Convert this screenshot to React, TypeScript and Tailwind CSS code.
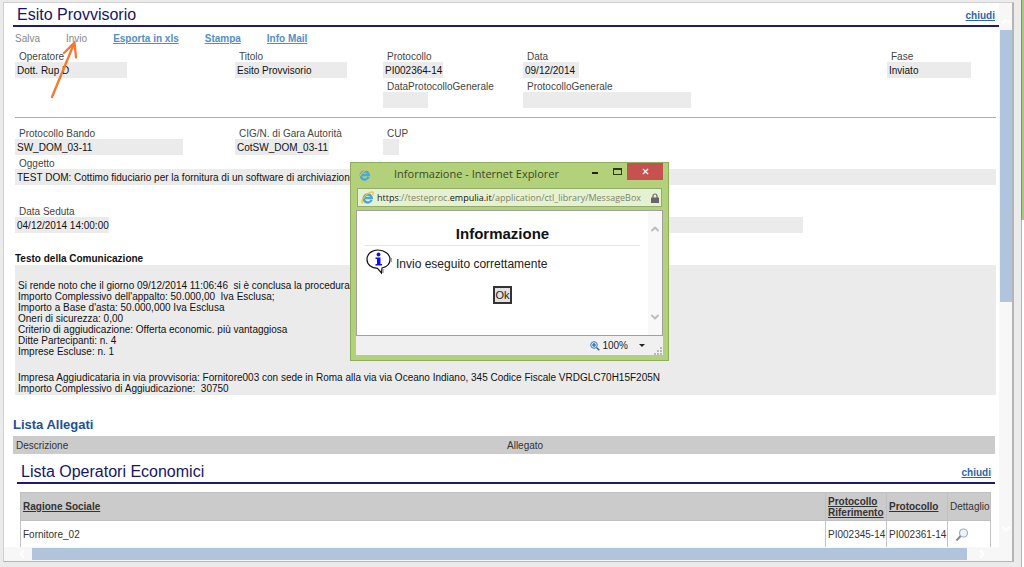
import React from 'react';
import { ChevronDown, ChevronLeft, ChevronRight, ChevronUp } from 'lucide-react';

interface FieldProps {
  id: string;
  label: string;
  value?: string;
  width: string;
  className?: string;
}

const Field = ({ id, label, value = '', width, className = '' }: FieldProps) => (
  <div className={`flex flex-col ${className}`}>
    <label htmlFor={id} className="h-[14px] pl-1 leading-[18px] whitespace-nowrap text-[#444]">
      {label}
    </label>
    <input
      id={id}
      readOnly
      value={value}
      className={`h-4 bg-[#ebebeb] pl-[2px] text-[#111] outline-none ${width}`}
    />
  </div>
);

interface SectionTitleProps {
  title: string;
  className?: string;
}

const SectionTitle = ({ title, className = '' }: SectionTitleProps) => (
  <div
    className={`flex h-6 items-center justify-between border-b-2 border-[#1c1c70] pt-[2px] pl-1 ${className}`}
  >
    <h1 className="text-[16px] leading-5 text-[#15156b]">{title}</h1>
    <a href="#chiudi" className="font-bold text-[#2a65b0] underline">
      chiudi
    </a>
  </div>
);

const IeIcon = ({ className }: { className: string }) => (
  <svg viewBox="0 0 16 16" className={className} fill="none">
    <path
      d="M13 11A5 5 0 1 1 13.300 8.700H5"
      stroke="#4aa8dc"
      strokeWidth="3"
    />
    <path
      d="M2.600 14.800C0 15 .8 10.600 4.600 6.600 8.600 2.400 13.600 0 14.800 1.600c.6.9.1 2-.5 3.200"
      stroke="#edc33b"
      strokeWidth="1.500"
    />
  </svg>
);

const InfoIcon = () => (
  <svg viewBox="0 0 26 26" className="h-[26px] w-[26px] shrink-0">
    <path
      d="M12 1C18.500 1 24 5 24 10.500c0 4.500-3.500 7.500-8 8.500l-.5 5-4-4.700C5.500 19 1 15.500 1 10.500 1 5 5.500 1 12 1Z"
      fill="#fff"
      stroke="#111"
      strokeWidth="1.200"
    />
    <path d="M17 20v4M25.200 9v4" stroke="#777" strokeWidth="1" />
    <circle cx="12.500" cy="5.500" r="1.900" fill="#1010f0" />
    <path d="M9.500 8.500h5V15H16v1.500H9.500V15H11v-5H9.500Z" fill="#1010f0" />
  </svg>
);

const MagnifierIcon = () => (
  <svg viewBox="0 0 14 14" className="h-[14px] w-[14px]" fill="none">
    <circle cx="8.500" cy="5" r="4" fill="#eef4fa" stroke="#9fb0c4" strokeWidth="1.200" />
    <path d="M5.600 8 1.500 12.500" stroke="#8a8a8a" strokeWidth="2" />
  </svg>
);

const ZoomIcon = () => (
  <svg viewBox="0 0 10 10" className="h-[10px] w-[10px]" fill="none">
    <circle cx="4" cy="4" r="3.300" fill="#d6e8f8" stroke="#3f7fc0" />
    <path d="M2 4h4M4 2v4" stroke="#1f5fa8" strokeWidth="1.200" />
    <path d="M6.500 6.500 9.300 9.300" stroke="#47617c" strokeWidth="1.500" />
  </svg>
);

const Toolbar = () => (
  <div className="flex h-[21px] items-center gap-[26px] pt-px pl-[11px]">
    <button disabled className="text-[#888]">Salva</button>
    <button disabled className="text-[#888]">Invio</button>
    <a href="#xls" className="font-bold text-[#4f8fcc] underline">Esporta in xls</a>
    <a href="#stampa" className="font-bold text-[#4f8fcc] underline">Stampa</a>
    <a href="#mail" className="font-bold text-[#4f8fcc] underline">Info Mail</a>
  </div>
);

const comunicazione = [
  'Si rende noto che il giorno 09/12/2014 11:06:46  si è conclusa la procedura',
  "Importo Complessivo dell'appalto: 50.000,00  Iva Esclusa;",
  "Importo a Base d'asta: 50.000,000 Iva Esclusa",
  'Oneri di sicurezza: 0,00',
  'Criterio di aggiudicazione: Offerta economic. più vantaggiosa',
  'Ditte Partecipanti: n. 4',
  'Imprese Escluse: n. 1',
];

const aggiudicazione = [
  'Impresa Aggiudicataria in via provvisoria: Fornitore003 con sede in Roma alla via via Oceano Indiano, 345 Codice Fiscale VRDGLC70H15F205N',
  'Importo Complessivo di Aggiudicazione:  30750',
];

const columns = 'grid grid-cols-[220fr_148fr_140fr_364fr_109fr]';

const Details = () => (
  <div className="ml-[11px] mr-[3px]">
    <div className={columns}>
      <Field id="operatore" label="Operatore" value="Dott. Rup D" width="w-28" />
      <Field id="titolo" label="Titolo" value="Esito Provvisorio" width="w-28" />
      <Field id="protocollo" label="Protocollo" value="PI002364-14" width="w-[60px]" />
      <Field id="data" label="Data" value="09/12/2014" width="w-14" />
      <Field id="fase" label="Fase" value="Inviato" width="w-[84px]" />
      <Field
        id="data-generale"
        label="DataProtocolloGenerale"
        width="w-[45px]"
        className="col-start-3"
      />
      <Field id="protocollo-generale" label="ProtocolloGenerale" width="w-[168px]" />
    </div>
    <hr className="mt-[9px] mb-[7px] border-[#b0b0b0]" />
    <div className={columns}>
      <Field id="bando" label="Protocollo Bando" value="SW_DOM_03-11" width="w-[168px]" />
      <Field id="cig" label="CIG/N. di Gara Autorità" value="CotSW_DOM_03-11" width="w-[94px]" />
      <Field id="cup" label="CUP" width="w-4" />
      <Field
        id="oggetto"
        label="Oggetto"
        value="TEST DOM: Cottimo fiduciario per la fornitura di un software di archiviazione w"
        width="w-full"
        className="col-span-5 col-start-1"
      />
    </div>
    <div className={`mt-[18px] ${columns}`}>
      <Field id="seduta" label="Data Seduta" value="04/12/2014 14:00:00" width="w-[94px]" />
      <Field id="note" label="" width="w-[280px]" className="col-start-4" />
    </div>
    <h2 className="mt-5 leading-3 font-bold text-[#111]">Testo della Comunicazione</h2>
    <div className="flex flex-col gap-[15px] bg-[#ebebeb] px-[3px] pt-[15px] pb-px leading-[11px] whitespace-pre text-[#111]">
      {[comunicazione, aggiudicazione].map((lines) => (
        <p key={lines[0]}>{lines.join('\n')}</p>
      ))}
    </div>
  </div>
);

const Attachments = () => (
  <div className="ml-[9px] mr-[4px] mt-[22px]">
    <h2 className="h-[19px] text-[13px] leading-4 font-bold text-[#1c4f9c]">Lista Allegati</h2>
    <table className="w-full table-fixed bg-[#cbcbcb] text-left text-[#333]">
      <thead>
        <tr className="h-[18px]">
          <th className="pl-[3px] font-normal">Descrizione</th>
          <th className="pl-[3px] font-normal">Allegato</th>
        </tr>
      </thead>
    </table>
  </div>
);

const Operators = () => (
  <div className="ml-[13px] mr-[4px] mt-[6px]">
    <SectionTitle title="Lista Operatori Economici" className="pr-1" />
    <div className="mt-2 ml-[3px] mr-1">
      <table className="w-full table-fixed border-collapse border border-[#c4c4c4] text-left text-[#333]">
        <colgroup>
          <col />
          <col className="w-[61px]" />
          <col className="w-[61px]" />
          <col className="w-[43px]" />
        </colgroup>
        <thead>
          <tr className="h-7 bg-[#cbcbcb] leading-[11px]">
            <th className="border border-[#c0c0c0] pl-[2px] underline">Ragione Sociale</th>
            <th className="border border-[#c0c0c0] pl-[2px] underline">Protocollo Riferimento</th>
            <th className="border border-[#c0c0c0] pl-[2px] underline">Protocollo</th>
            <th className="border border-[#c0c0c0] pl-[2px] font-normal">Dettaglio</th>
          </tr>
        </thead>
        <tbody>
          <tr className="h-7">
            <td className="border border-[#c4c4c4] pl-[2px]">Fornitore_02</td>
            <td className="border border-[#c4c4c4] pl-[2px]">PI002345-14</td>
            <td className="border border-[#c4c4c4] pl-[2px]">PI002361-14</td>
            <td className="border border-[#c4c4c4] pl-[7px]">
              <button aria-label="Dettaglio" className="block">
                <MagnifierIcon />
              </button>
            </td>
          </tr>
        </tbody>
      </table>
    </div>
  </div>
);

const VerticalScrollbar = () => (
  <div className="flex w-[13px] shrink-0 flex-col items-center bg-[#f7f7f7]">
    <ChevronUp className="mt-3 mb-[3px] h-3 w-3 shrink-0 text-white" strokeWidth={4} />
    <div className="h-1/2 w-3 bg-[#b0c4de]" />
    <ChevronDown className="mt-auto mb-3 h-3 w-3 shrink-0 text-white" strokeWidth={4} />
  </div>
);

const HorizontalScrollbar = () => (
  <div className="flex h-[14px] shrink-0 items-center bg-[#f7f7f7]">
    <ChevronLeft className="mr-1 ml-3 h-3 w-3 shrink-0 text-white" strokeWidth={4} />
    <div className="h-3 flex-1 bg-[#b0c4de]" />
    <ChevronRight className="mr-6 ml-[9px] h-3 w-3 shrink-0 text-white" strokeWidth={4} />
  </div>
);

const MessageDialog = () => (
  <div
    role="dialog"
    aria-label="Informazione"
    className="absolute top-[162px] left-[350px] flex w-[319px] flex-col border border-[#8fae5c] bg-[#b3d17a] px-[5px] pb-[5px]"
  >
    <div className="flex h-[25px] items-start">
      <IeIcon className="mt-[5px] ml-[2px] h-[13px] w-[13px]" />
      <h2 className="flex-1 pt-[3px] pl-[23px] font-['Open_Sans',sans-serif] text-[11px] leading-4 whitespace-nowrap text-[#3c4a26]">
        Informazione - Internet Explorer
      </h2>
      <button aria-label="Riduci" className="flex h-4 w-6 items-center justify-center">
        <span className="mt-[3px] h-[2px] w-[6px] bg-[#222]" />
      </button>
      <button aria-label="Ingrandisci" className="flex h-4 w-5 items-center justify-center">
        <span className="h-[7px] w-[9px] border border-t-2 border-[#2c3a18]" />
      </button>
      <button
        aria-label="Chiudi"
        className="flex h-[17px] w-9 items-center justify-center bg-[#c75050]"
      >
        <svg viewBox="0 0 8 8" className="h-[7px] w-[7px]">
          <path d="M1 1l6 6M7 1 1 7" stroke="#fff" strokeWidth="1.600" />
        </svg>
      </button>
    </div>
    <div className="mx-px flex h-[19px] items-center border border-[#93ab6c] bg-[#e6f1d2] pl-[3px] pr-[2px] font-['Open_Sans',sans-serif] text-[9px]">
      <IeIcon className="h-[13px] w-[13px] shrink-0" />
      <p className="ml-[3px] flex-1 overflow-hidden whitespace-nowrap text-[#7b8568]">
        <span className="text-[#222]">https</span>://testeproc.
        <span className="text-[#111]">empulia.it</span>/application/ctl_library/MessageBox
      </p>
      <svg viewBox="0 0 8 10" className="ml-[5px] h-[10px] w-2 shrink-0">
        <path d="M2 5V3a2 2 0 0 1 4 0v2" fill="none" stroke="#666" strokeWidth="1.200" />
        <path d="M0 4.500h8V10H0Z" fill="#666" />
      </svg>
    </div>
    <div className="mt-[3px] flex h-[126px] border border-[#a0a0a0] bg-white">
      <div className="flex flex-1 flex-col px-2 pt-3">
        <h3 className="h-[23px] border-b border-[#e4e4e4] text-center text-[15px] leading-[22px] font-bold text-[#111]">
          Informazione
        </h3>
        <div className="mt-[3px] flex items-center gap-1 pl-px text-[12px] text-[#222]">
          <InfoIcon />
          <p className="mt-1">Invio eseguito correttamente</p>
        </div>
        <button className="mt-[11px] h-[18px] w-[19px] self-center border-2 border-[#333] bg-[#e2e2e2] text-[11px] leading-[14px] text-[#222]">
          Ok
        </button>
      </div>
      <div className="flex w-[14px] flex-col items-center justify-between bg-[#f8f8f8] py-3 text-[#bdbdbd]">
        <ChevronUp className="h-3 w-3" strokeWidth={4} />
        <ChevronDown className="h-3 w-3" strokeWidth={4} />
      </div>
    </div>
    <div className="flex h-[19px] items-center bg-[#f0f0f0] text-[#222]">
      <button className="ml-auto flex items-center gap-[2px]">
        <ZoomIcon />
        <span>100%</span>
        <span className="ml-[9px] border-x-[3px] border-t-[3px] border-x-transparent border-t-[#222]" />
      </button>
      <svg viewBox="0 0 8 8" className="mr-px ml-[9px] h-2 w-2 self-end" fill="#b8b8b8">
        <path d="M6 0h2v2H6ZM3 3h2v2H3ZM6 3h2v2H6ZM0 6h2v2H0ZM3 6h2v2H3ZM6 6h2v2H6Z" />
      </svg>
    </div>
  </div>
);

const Arrow = () => (
  <svg
    viewBox="0 0 28 60"
    className="pointer-events-none absolute top-[40px] left-[50px] h-[60px] w-7"
    fill="none"
    stroke="#f9772b"
    strokeWidth="2.300"
    strokeLinecap="round"
  >
    <path d="M2 57 24.500 2.500M14 13 24.500 2.500 26 17.500" />
  </svg>
);

export default function App() {
  return (
    <div className="relative flex h-screen overflow-hidden bg-[#ebebeb] font-['Liberation_Sans',Arial,sans-serif] text-[10px]">
      <div className="mt-[2px] mb-[5px] ml-[3px] flex min-w-0 flex-1 flex-col border border-r-2 border-[#d0d0d0] border-r-[#b5b5b5] border-b-[#b5b5b5] bg-white">
        <div className="flex min-h-0 flex-1">
          <main className="min-w-0 flex-1 overflow-hidden">
            <SectionTitle title="Esito Provvisorio" className="ml-[9px] pr-1" />
            <Toolbar />
            <Details />
            <Attachments />
            <Operators />
          </main>
          <VerticalScrollbar />
        </div>
        <HorizontalScrollbar />
      </div>
      <div className="flex w-[10px] flex-col items-end">
        <div className="h-[220px] w-[3px] border-l border-[#7f9a5c] bg-[#a9c97c]" />
        <div className="w-[3px] flex-1 border-l border-[#b5b5b5] bg-white" />
      </div>
      <Arrow />
      <MessageDialog />
    </div>
  );
}
